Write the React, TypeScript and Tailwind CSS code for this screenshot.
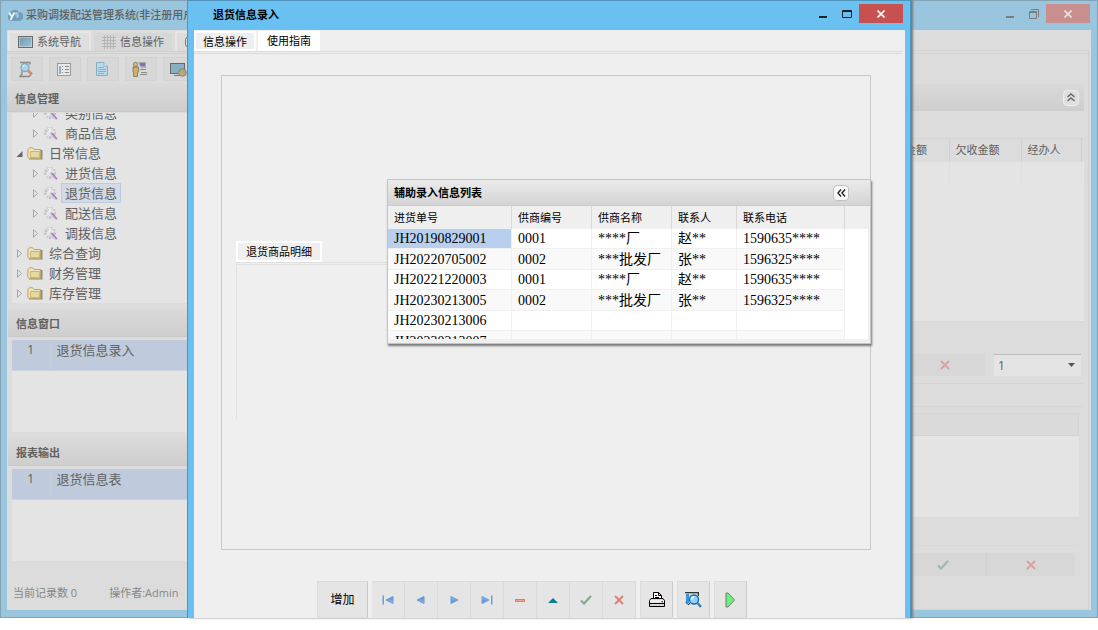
import type { ReactNode } from 'react';
import clsx from 'clsx';

const receipts = [
  ['JH20190829001', '0001', '****厂', '赵**', '1590635****'],
  ['JH20220705002', '0002', '***批发厂', '张**', '1596325****'],
  ['JH20221220003', '0001', '****厂', '赵**', '1590635****'],
  ['JH20230213005', '0002', '***批发厂', '张**', '1596325****'],
  ['JH20230213006', '', '', '', ''],
  ['JH20230213007', '', '', '', '']
];

const tree = [
  { label: '类别信息', level: 2 },
  { label: '商品信息', level: 2 },
  { label: '日常信息', level: 1, open: true },
  { label: '进货信息', level: 2 },
  { label: '退货信息', level: 2, selected: true },
  { label: '配送信息', level: 2 },
  { label: '调拨信息', level: 2 },
  { label: '综合查询', level: 1 },
  { label: '财务管理', level: 1 },
  { label: '库存管理', level: 1 }
];

function CloudLogo() {
  return (
    <svg width="16" height="14" viewBox="0 0 16 14">
      <path d="M4 13a4 4 0 0 1-1-7.500A5 5 0 0 1 12 4a4.500 4.500 0 0 1 0 9z" fill="#6f9dbd" />
      <path d="M2 4.500l3 4.500 2.500-4.500M5 9l-1.500 3" stroke="#eef3f6" strokeWidth="1.800" fill="none" />
      <path d="M12 5H9v2h2v2H9" stroke="#b9d3e2" strokeWidth="1.200" fill="none" />
    </svg>
  );
}

function ScreenIcon() {
  return (
    <svg width="15" height="12" viewBox="0 0 15 12">
      <defs>
        <linearGradient id="screen" x1="0" y1="0" x2="1" y2="1">
          <stop offset="0" stopColor="#7397ab" />
          <stop offset="1" stopColor="#9bc3d7" />
        </linearGradient>
      </defs>
      <rect x=".5" y=".5" width="14" height="11" fill="#ddd" stroke="#6b6b6b" />
      <rect x="1.500" y="1.500" width="12" height="9" fill="url(#screen)" />
    </svg>
  );
}

function GridIcon() {
  return (
    <svg width="14" height="14" viewBox="0 0 14 14" shapeRendering="crispEdges">
      <path
        d="M2.500 0v14M5.500 0v14M8.500 0v14M11.500 0v14M0 2.500h14M0 5.500h14M0 8.500h14M0 11.500h14"
        stroke="#b4b4b4"
        fill="none"
      />
    </svg>
  );
}

function SearchDocIcon() {
  return (
    <svg width="16" height="17" viewBox="0 0 16 17">
      <path d="M2 1.500h10v2M4 4v9l-2 2.500h9l2-2" fill="none" stroke="#888" strokeWidth="1.300" />
      <circle cx="7" cy="6.500" r="4" fill="#a9d4e6" stroke="#7fa9bd" strokeWidth="1.300" />
      <path d="M5 6a2 2 0 0 1 2-2" stroke="#e6f3f8" fill="none" />
      <path d="M10 9.500l4 4" stroke="#d08a72" strokeWidth="2.500" />
    </svg>
  );
}

function FormIcon() {
  return (
    <svg width="14" height="13" viewBox="0 0 14 13" shapeRendering="crispEdges">
      <rect x=".5" y=".5" width="13" height="12" fill="#e8e8e8" stroke="#999" />
      <path d="M2 3h2v8H2z" fill="#8db2c8" />
      <path d="M5 3.500h1M8 3.500h4M5 6.500h1M8 6.500h4M5 9.500h1M8 9.500h4" stroke="#888" />
    </svg>
  );
}

function PageIcon() {
  return (
    <svg width="12" height="14" viewBox="0 0 12 14">
      <path d="M.5.5H8l3.500 3.500v9.500H.5z" fill="#b9dcec" stroke="#88acc0" />
      <path d="M8 .5V4h3.500" fill="#eef5f8" stroke="#88acc0" />
      <path d="M2 5.500h6M2 7.500h8M2 9.500h8M2 11.500h6" stroke="#86b2c8" />
    </svg>
  );
}

function PersonIcon() {
  return (
    <svg width="16" height="16" viewBox="0 0 16 16">
      <path d="M6 1h8v6H9z" fill="#aaa" />
      <path d="M8 2h5v3H8z" fill="#7774c4" />
      <path d="M8 8.500h6M9 11.500h6M8 13.500h7" stroke="#8a8a8a" />
      <circle cx="3.500" cy="3.500" r="2.200" fill="#d4b878" stroke="#776b50" strokeWidth=".7" />
      <path d="M1 6h5.500v5H5.500v4.500h-4V11H1z" fill="#ceb06c" stroke="#766845" strokeWidth=".7" />
    </svg>
  );
}

function GlobeScreenIcon() {
  return (
    <svg width="17" height="15" viewBox="0 0 17 15">
      <rect x=".5" y="1.500" width="14" height="10" fill="#88aec1" stroke="#666" />
      <path d="M4 13.500h7" stroke="#777" />
      <circle cx="12.500" cy="10.500" r="3.800" fill="#9ab07d" stroke="#9a719c" />
      <path d="M9 10h4v3l-2 1z" fill="#c9aa67" />
    </svg>
  );
}

function FolderIcon() {
  return (
    <svg width="16" height="13" viewBox="0 0 16 13">
      <path d="M14 3h1.500v9.500H2V11h12z" fill="#8b8b86" />
      <path d="M1 2.500L2.500.7h3L7 2.500h6.500v8.800H2L.7 10z" fill="#ece5bb" stroke="#bfa564" />
      <path d="M3.500 4.500h9v6h-9z" fill="#e4d9a0" stroke="#cdb67a" />
    </svg>
  );
}

function GearIcon() {
  return (
    <svg width="16" height="13" viewBox="0 0 16 13">
      <circle cx="7" cy="6" r="4.500" fill="none" stroke="#c2c2c2" strokeWidth="3" strokeDasharray="2 1" />
      <path d="M3 10L8 1M5 1l6 4" stroke="#ededed" strokeWidth="1.500" />
      <path d="M7.500 6l6 6.500" stroke="#d6c3e0" strokeWidth="2.500" />
      <path d="M8.500 6l5.500 6" stroke="#a473be" strokeWidth="1.200" />
    </svg>
  );
}

function TreeArrow({ open }: { open?: boolean }) {
  return (
    <svg width="7" height="9" viewBox="0 0 7 9">
      {open ? (
        <path d="M6.500 2v6H.5z" fill="#666" />
      ) : (
        <path d="M1.500.8v7.400l4-3.700z" fill="#eaeaea" stroke="#a5a5a5" />
      )}
    </svg>
  );
}

function CrossIcon({ faded }: { faded?: boolean }) {
  return (
    <svg width="10" height="10" viewBox="0 0 10 10">
      <path d="M1 1l8 8M9 1L1 9" stroke={faded ? '#d9a39b' : '#df8176'} strokeWidth="2" />
    </svg>
  );
}

function TickIcon({ faded }: { faded?: boolean }) {
  return (
    <svg width="12" height="10" viewBox="0 0 12 10">
      <path d="M1 5.500L4 8.500 11 1" stroke={faded ? '#9ab8a4' : '#7bab8a'} strokeWidth="2" fill="none" />
    </svg>
  );
}

function NavIcon({ back, bar }: { back?: boolean; bar?: boolean }) {
  return (
    <svg width="12" height="10" viewBox="0 0 12 10" className={clsx(back && 'rotate-180')}>
      <defs>
        <linearGradient id="nav" x1="0" y1="0" x2="0" y2="1">
          <stop offset="0" stopColor="#93c2f2" />
          <stop offset="1" stopColor="#4f86d0" />
        </linearGradient>
      </defs>
      {bar ? (
        <>
          <path d="M1 1.500l7 3.500-7 3.500z" fill="url(#nav)" stroke="#6a9cd8" />
          <path d="M10 .5h1.500v9H10z" fill="#6c9ed9" />
        </>
      ) : (
        <path d="M3 1.500l7 3.500-7 3.500z" fill="url(#nav)" stroke="#6a9cd8" />
      )}
    </svg>
  );
}

function PrinterIcon() {
  return (
    <svg width="16" height="16" viewBox="0 0 16 16">
      <path d="M4.500 7V.5h5l3 3V7" fill="#fff" stroke="#000" />
      <path d="M9.500.5v3h3M6 3.500h2M6 5.500h4" stroke="#000" fill="none" />
      <path d="M2 6.500h12l1.500 2v6H.5v-6z" fill="#d5d5d5" stroke="#000" />
      <path d="M1 8h14v2.500H1z" fill="#eee" />
      <path d="M.5 11.500h15" stroke="#000" />
      <path d="M12.500 9h1.500v1.300h-1.500z" fill="#f00" />
    </svg>
  );
}

function PreviewIcon() {
  return (
    <svg width="17" height="17" viewBox="0 0 17 17">
      <path d="M.5 1h13v11H.5z" fill="#d6d6d6" />
      <path d="M0 1h14v1.200H0zM12.800 2H14v3h-1.200z" fill="#333" />
      <path d="M1 3h3v9H1z" fill="#3b95dc" />
      <circle cx="9" cy="8.500" r="4.500" fill="#8fd1fb" stroke="#1c66a8" strokeWidth="1.300" />
      <path d="M6.500 8.500A2.500 2.500 0 0 1 9 6" stroke="#fff" fill="none" strokeWidth="1.500" />
      <path d="M12.500 12l3.500 4" stroke="#2f86c8" strokeWidth="2.500" />
      <path d="M1 11.500l2 2 2-1" stroke="#111" fill="none" />
    </svg>
  );
}

function PlayIcon() {
  return (
    <svg width="11" height="16" viewBox="0 0 11 16">
      <path d="M1 1h2l6.500 7L3 15H1z" fill="#6df07a" stroke="#777" />
    </svg>
  );
}

function WindowButtons({ restore, faded }: { restore?: boolean; faded?: boolean }) {
  const stroke = faded ? '#7c7c7c' : '#222';
  return (
    <div className="flex items-start">
      <button aria-label="最小化" className="flex h-[26px] w-6 items-center justify-center">
        <svg width="8" height="12">
          <path d="M0 9h8" stroke={stroke} strokeWidth="2" />
        </svg>
      </button>
      <button aria-label="最大化" className="flex h-[26px] w-6 items-center justify-center">
        <svg width="12" height="12" viewBox="0 0 12 12" fill="none" stroke={stroke}>
          {restore ? (
            <>
              <path d="M1.500 3.500h7v7h-7zM1 4.500h8" />
              <path d="M3 1.500h7.500V9" />
            </>
          ) : (
            <path d="M1.500 2.500h9v7h-9zM1 3.500h10" />
          )}
        </svg>
      </button>
      <button
        aria-label="关闭"
        className={clsx(
          'mt-[3px] flex h-[19px] w-11 items-center justify-center',
          faded ? 'bg-[#c98f8e]' : 'bg-[#c75050]'
        )}
      >
        <svg width="8" height="8" viewBox="0 0 8 8">
          <path d="M.5.5l7 7M7.500.5l-7 7" stroke={faded ? '#e6e6e6' : '#fff'} strokeWidth="1.600" />
        </svg>
      </button>
    </div>
  );
}

function PanelTitle({ children }: { children: ReactNode }) {
  return (
    <h2 className="flex h-7 shrink-0 items-center border-b border-[#cacaca] bg-linear-to-b from-[#dadada] to-[#cecece] px-2 pt-[3px] text-[11px] font-bold">
      {children}
    </h2>
  );
}

function WindowList({ title, item }: { title: string; item: string }) {
  return (
    <section className="mt-[6px] pl-px">
      <PanelTitle>{title}</PanelTitle>
      <div className="mt-[3px] ml-1 h-[92px] bg-[#e4e4e4]">
        <table className="w-full">
          <tbody>
            <tr className="h-[30px] border-b border-[#cdd3dc] bg-[#bfcbdc] align-top">
              <td className="w-[38px] border-r border-[#c5ced9] pt-0.5 text-center text-xs leading-4">1</td>
              <td className="pl-[6px] text-[13px] leading-5">{item}</td>
            </tr>
          </tbody>
        </table>
      </div>
    </section>
  );
}

function Sidebar() {
  const tools = [SearchDocIcon, FormIcon, PageIcon, PersonIcon, GlobeScreenIcon];
  return (
    <aside className="flex w-60 shrink-0 flex-col overflow-hidden">
      <div className="flex h-[21px] gap-[3px] pt-px pl-px text-[11px]">
        <button className="flex items-center gap-1 border-2 border-b-0 border-[#e6e6e6] bg-[#dfdfdf] px-2 whitespace-nowrap">
          <ScreenIcon />
          系统导航
        </button>
        <button className="flex items-center gap-1 border-t-2 border-[#dcdcdc] bg-[#d7d7d7] px-2 whitespace-nowrap">
          <GridIcon />
          信息操作
        </button>
        <button
          aria-label="使用指南"
          className="flex items-center gap-1 border-2 border-b-0 border-[#e6e6e6] px-2 whitespace-nowrap"
        >
          <svg width="10" height="10">
            <rect x=".5" y=".5" width="9" height="9" rx="2" fill="none" stroke="#777" />
          </svg>
        </button>
      </div>
      <div className="h-[3px] shrink-0 border-y border-[#d0d0d0]" />
      <div className="my-[3px] flex h-6 shrink-0 gap-[6px] pl-1">
        {tools.map((Icon, i) => (
          <button
            key={i}
            aria-label={`工具 ${i + 1}`}
            className="flex w-8 shrink-0 items-center justify-center border border-[#d2d2d2] bg-[#d8d8d8] pr-0.5"
          >
            <Icon />
          </button>
        ))}
      </div>
      <PanelTitle>信息管理</PanelTitle>
      <ul className="mt-px ml-[5px] flex h-[190px] shrink-0 flex-col justify-end overflow-hidden bg-[#e4e4e4] text-[13px]">
        {tree.map((node) => (
          <li key={node.label} className={clsx('flex h-5 shrink-0 items-center gap-1', node.level === 1 ? 'pl-1' : 'pl-5')}>
            <TreeArrow open={node.open} />
            {node.level === 1 ? <FolderIcon /> : <GearIcon />}
            <a
              href="#"
              className={clsx(
                '-ml-0.5 border px-[3px] leading-[18px]',
                node.selected ? 'border-[#bccbe0] bg-[#d3dae5]' : 'border-transparent'
              )}
            >
              {node.label}
            </a>
          </li>
        ))}
      </ul>
      <WindowList title="信息窗口" item="退货信息录入" />
      <WindowList title="报表输出" item="退货信息表" />
      <footer className="flex flex-1 items-center gap-8 pt-4 pl-[6px] text-[11px] whitespace-nowrap text-[#868686]">
        <span>当前记录数 0</span>
        <span>操作者:Admin</span>
      </footer>
    </aside>
  );
}

function LedgerPanel() {
  return (
    <section className="mt-5 mr-0.5 flex flex-1 flex-col border-y border-r border-[#d2d2d2]">
      <div className="h-[3px] border-b border-[#d2d2d2]" />
      <div className="mt-[30px] mr-1 flex h-[27px] items-center justify-end bg-linear-to-b from-[#d9d9d9] to-[#cecece] pr-[5px]">
        <button aria-label="折叠" className="flex size-4 items-center justify-center rounded-sm border border-[#eee] bg-[#dedede]">
          <svg width="8" height="9" viewBox="0 0 8 9" fill="none" stroke="#666" strokeWidth="1.400">
            <path d="M.5 4L4 1l3.500 3M.5 8L4 5l3.500 3" />
          </svg>
        </button>
      </div>
      <div className="mt-[27px] mr-1 h-[184px] border-b border-[#d8d8d8] bg-[#e4e4e4]">
        <table className="w-full table-fixed text-[11px]">
          <thead>
            <tr className="h-[23px] border-t border-[#d5d5d5] bg-[#dcdcdc] text-left">
              <th />
              <th className="w-[72px] border-r border-[#d0d0d0] pl-[6px] font-normal">已收金额</th>
              <th className="w-[72px] border-r border-[#d0d0d0] pl-[6px] font-normal">欠收金额</th>
              <th className="w-[60px] border-r border-[#d0d0d0] pl-[6px] font-normal">经办人</th>
              <th className="w-[3px]" />
            </tr>
          </thead>
          <tbody>
            <tr className="h-5">
              <td />
              <td className="border-r border-[#dfdfdf]" />
              <td className="border-r border-[#dfdfdf]" />
              <td className="border-r border-[#dfdfdf]" />
              <td />
            </tr>
          </tbody>
        </table>
      </div>
      <div className="mt-8 mr-[7px] flex h-[22px] justify-end gap-[9px]">
        <button aria-label="取消" className="flex w-20 items-center justify-center bg-[#d7d7d7]">
          <CrossIcon faded />
        </button>
        <label className="relative flex w-[87px] items-center">
          <select
            aria-label="页码"
            className="h-full w-full appearance-none rounded-none border-t border-[#bcbcbc] bg-[#e4e4e4] pl-1 text-xs"
          >
            <option>1</option>
          </select>
          <svg width="7" height="4" className="pointer-events-none absolute right-[6px]">
            <path d="M0 0h7L3.500 4z" fill="#555" />
          </svg>
        </label>
      </div>
      <div className="mt-[7px] mr-1 h-6 border-y border-[#d5d5d5]" />
      <div className="mt-[6px] mr-[9px] h-[104px] bg-[#e4e4e4]">
        <div className="h-[23px] border border-[#d3d3d3] bg-[#dadada]" />
      </div>
      <div className="mt-7 mr-[9px] border-t border-[#d8d8d8]" />
      <div className="mt-[7px] mr-[13px] flex h-[23px] justify-end">
        <button aria-label="确定" className="flex w-[88px] items-center justify-center border-r border-[#cfcfcf] bg-[#d7d7d7]">
          <TickIcon faded />
        </button>
        <button aria-label="放弃" className="flex w-[88px] items-center justify-center bg-[#d7d7d7]">
          <CrossIcon faded />
        </button>
      </div>
    </section>
  );
}

function MainWindow() {
  return (
    <div className="flex min-h-0 flex-1 flex-col border border-[#84a3b5] bg-[#9ac5de] px-[6px] pb-[7px] text-[#606060]">
      <header className="flex h-[29px] shrink-0 items-start justify-between pr-px">
        <h1 className="flex h-7 items-center gap-[3px] text-[11px] font-medium">
          <CloudLogo />
          采购调拨配送管理系统(非注册用户)
        </h1>
        <WindowButtons restore faded />
      </header>
      <div className="flex min-h-0 flex-1 bg-[#dcdcdc]">
        <Sidebar />
        <LedgerPanel />
      </div>
    </div>
  );
}

function LookupPopup() {
  return (
    <section className="absolute top-[103px] -right-px w-[484px] border border-[#c4c4c4] bg-[#efefef] pr-0.5 pb-1 shadow-[1px_2px_2px_#777]">
      <header className="-mr-0.5 flex h-[26px] items-center justify-between border-b border-[#ccc] bg-linear-to-b from-[#ebebeb] to-[#d4d4d4] pr-[21px] pl-[6px]">
        <h2 className="pt-0.5 text-[11px] font-bold">辅助录入信息列表</h2>
        <button aria-label="收起" className="flex size-4 items-center justify-center rounded-sm border border-[#c2c2c2] bg-[#f8f8f8]">
          <svg width="9" height="8" viewBox="0 0 9 8" fill="none" stroke="#222" strokeWidth="1.400">
            <path d="M4 .5L1 4l3 3.500M8 .5L5 4l3 3.500" />
          </svg>
        </button>
      </header>
      <div className="h-[133px] overflow-hidden bg-white">
        <table className="w-full table-fixed border-separate border-spacing-0 text-left">
          <thead>
            <tr className="h-[23px] bg-[#efefef] text-[11px] [&>th]:border-[#d8d8d8] [&>th]:p-0 [&>th]:pt-px [&>th]:pl-[6px] [&>th]:font-normal [&>th:not(:last-child)]:border-r">
              <th className="w-[124px]">进货单号</th>
              <th className="w-20">供商编号</th>
              <th className="w-20">供商名称</th>
              <th className="w-[65px]">联系人</th>
              <th className="w-[108px]">联系电话</th>
              <th />
            </tr>
          </thead>
          <tbody className="font-['Liberation_Serif','Noto_Sans_CJK_SC',serif] text-sm leading-[18px]">
            {receipts.map((row, i) => (
              <tr key={row[0]} className="odd:h-5 even:h-[21px]">
                {row.map((cell, j) => (
                  <td
                    key={j}
                    className={clsx(
                      'border-r border-b border-[#f0f0f0] p-0 pt-px pl-[6px] whitespace-nowrap',
                      i === 0 && j === 0 ? 'bg-[#b8cfee]' : i % 2 === 1 && 'bg-[#f9f9f9]'
                    )}
                  >
                    {cell}
                  </td>
                ))}
                <td />
              </tr>
            ))}
          </tbody>
        </table>
      </div>
    </section>
  );
}

function RecordToolbar() {
  const nav = [
    { label: '首条', icon: <NavIcon back bar /> },
    { label: '上一条', icon: <NavIcon back /> },
    { label: '下一条', icon: <NavIcon /> },
    { label: '末条', icon: <NavIcon bar /> },
    {
      label: '删除',
      icon: (
        <svg width="10" height="3">
          <path d="M0 0h10v3H0z" fill="#e07a60" />
          <path d="M1 1h8v1H1z" fill="#f0a890" />
        </svg>
      )
    },
    {
      label: '编辑',
      icon: (
        <svg width="10" height="5">
          <path d="M0 5l5-5 5 5z" fill="#0b7f97" />
        </svg>
      )
    },
    { label: '保存', icon: <TickIcon /> },
    { label: '取消', icon: <CrossIcon /> }
  ];
  const extra = [
    { label: '打印', icon: <PrinterIcon /> },
    { label: '预览', icon: <PreviewIcon /> },
    { label: '执行', icon: <PlayIcon /> }
  ];
  return (
    <div className="flex h-[37px] shrink-0 gap-1 pl-[123px]">
      <button className="w-[51px] border border-[#dcdcdc] border-r-[#c8c8c8] bg-[#e5e5e5] text-xs">增加</button>
      <div className="flex">
        {nav.map((b) => (
          <button
            key={b.label}
            aria-label={b.label}
            className="flex w-[33px] items-center justify-center border-t border-r border-[#dadada] bg-[#e5e5e5]"
          >
            {b.icon}
          </button>
        ))}
      </div>
      {extra.map((b) => (
        <button
          key={b.label}
          aria-label={b.label}
          className="flex w-[33px] items-center justify-center border border-[#dcdcdc] border-r-[#ccc] bg-[#e5e5e5]"
        >
          {b.icon}
        </button>
      ))}
    </div>
  );
}

function ReturnDialog() {
  return (
    <div
      role="dialog"
      aria-label="退货信息录入"
      className="absolute inset-x-[187px] top-0 bottom-3 flex flex-col border-t border-r border-l border-[#4f94bb] bg-[#69c0f1] pr-[5px] pl-[6px] text-black shadow-[2px_0_2px_#777]"
    >
      <header className="flex h-[29px] shrink-0 items-start justify-between pr-0.5 pl-[19px]">
        <h1 className="flex h-7 items-center text-[11px] font-bold">退货信息录入</h1>
        <WindowButtons />
      </header>
      <div className="flex min-h-0 flex-1 flex-col bg-[#efefef]">
        <div role="tablist" className="flex h-[21px] shrink-0 gap-0.5 pt-px text-[11px]">
          <button role="tab" aria-selected="true" className="w-[62px] border-2 border-white pt-px">
            信息操作
          </button>
          <button role="tab" aria-selected="false" className="w-[62px] bg-white pt-px">
            使用指南
          </button>
        </div>
        <div className="mr-[3px] h-[3px] shrink-0 border-y border-[#dadada]" />
        <div className="relative mt-[21px] mr-[34px] mb-[31px] ml-[27px] flex-1 border border-[#c8c8c8] pt-[165px] pr-7 pl-[14px]">
          <button className="block h-[21px] border-2 border-white px-2 text-[11px] leading-4">退货商品明细</button>
          <div className="h-[158px] border-t border-l border-[#e0e0e0] pt-px">
            <div className="border-t border-[#e0e0e0]" />
          </div>
          <LookupPopup />
        </div>
        <RecordToolbar />
      </div>
    </div>
  );
}

export default function App() {
  return (
    <div className="relative flex h-screen flex-col overflow-hidden bg-white pb-3 font-['Open_Sans','Noto_Sans_CJK_SC',sans-serif]">
      <MainWindow />
      <ReturnDialog />
    </div>
  );
}
